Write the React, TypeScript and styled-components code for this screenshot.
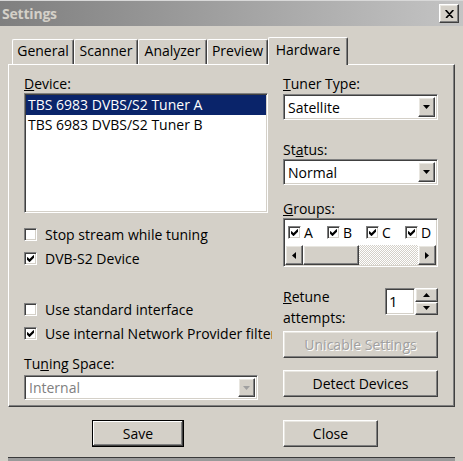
import React from "react";
import styled, { createGlobalStyle, css } from "styled-components";

const Global = createGlobalStyle`
  html, body { margin: 0; padding: 0; background: #d4d0c8; }
  body { font-family: "Open Sans", "Noto Sans", sans-serif; font-size: 14px; color: #000; }
  * { box-sizing: border-box; }
`;

const sunken = css`
  border: 1px solid;
  border-color: #808080 #ffffff #ffffff #808080;
  box-shadow: inset 1px 1px 0 #404040, inset -1px -1px 0 #d4d0c8;
`;

const raised = css`
  border: 1px solid;
  border-color: #ffffff #404040 #404040 #ffffff;
  box-shadow: inset -1px -1px 0 #808080, inset 1px 1px 0 #e8e6e0;
`;

const Window = styled.div`
  width: 463px;
  height: 461px;
  background: #d4d0c8;
  display: flex;
  flex-direction: column;
  overflow: hidden;
`;

const TitleBar = styled.div`
  height: 26px;
  flex: none;
  border-top: 1px solid #d8d8d8;
  background: linear-gradient(to right, #7f7f7f, #c4c4c4);
  display: flex;
  align-items: center;
  justify-content: space-between;
  padding: 0 4px 0 2px;
`;

const Title = styled.div`
  font-weight: bold;
  font-size: 14px;
  color: #d4d0c8;
  letter-spacing: -0.2px;
`;

const CloseBox = styled.div`
  width: 20px;
  height: 19px;
  background: #d4d0c8;
  ${raised};
  display: flex;
  align-items: center;
  justify-content: center;
`;

const Body = styled.div`
  flex: 1;
  padding: 11px 8px 0 8px;
  display: flex;
  flex-direction: column;
`;

const TabStrip = styled.div`
  height: 27px;
  display: flex;
  align-items: flex-end;
  padding-left: 4px;
  position: relative;
  z-index: 1;
`;

const Tab = styled.div<{ $active?: boolean; $w: number }>`
  width: ${(p) => p.$w}px;
  height: ${(p) => (p.$active ? 28 : 25)}px;
  margin-bottom: ${(p) => (p.$active ? -1 : 0)}px;
  background: #d4d0c8;
  border-top: 1px solid #ffffff;
  border-left: 1px solid #ffffff;
  border-right: 1px solid #404040;
  box-shadow: inset -1px 0 0 #808080;
  border-radius: 2px 2px 0 0;
  display: flex;
  justify-content: center;
  padding-top: ${(p) => (p.$active ? 2 : 1)}px;
  line-height: 20px;
  white-space: nowrap;
`;

const Panel = styled.div`
  height: 343px;
  border: 1px solid;
  border-color: #ffffff #404040 #404040 #ffffff;
  box-shadow: inset -1px -1px 0 #808080;
  padding: 10px 0 0 15px;
  display: grid;
  grid-template-columns: 244px 155px;
  column-gap: 15px;
  align-items: start;
`;

const Column = styled.div`
  display: flex;
  flex-direction: column;
`;

const Label = styled.div<{ $mt?: number }>`
  line-height: 18px;
  height: 18px;
  margin-top: ${(p) => p.$mt ?? 0}px;
  white-space: nowrap;
`;

const ListBox = styled.div`
  height: 120px;
  background: #fff;
  ${sunken};
  padding: 1px;
`;

const ListItem = styled.div<{ $selected?: boolean }>`
  height: 20px;
  line-height: 20px;
  padding-left: 2px;
  background: ${(p) => (p.$selected ? "#0a246a" : "transparent")};
  color: ${(p) => (p.$selected ? "#fff" : "#000")};
  white-space: nowrap;
`;

const CheckRow = styled.div<{ $mt?: number }>`
  width: 248px;
  height: 24px;
  margin-top: ${(p) => p.$mt ?? 0}px;
  display: flex;
  align-items: center;
  gap: 8px;
  overflow: hidden;
  white-space: nowrap;
`;

const Box = styled.div`
  width: 13px;
  height: 13px;
  flex: none;
  background: #fff;
  ${sunken};
  display: flex;
  align-items: center;
  justify-content: center;
`;

const Combo = styled.div<{ $mt?: number; $disabled?: boolean; $h?: number; $w?: number }>`
  height: ${(p) => p.$h ?? 26}px;
  width: ${(p) => (p.$w ? `${p.$w}px` : "auto")};
  margin-top: ${(p) => p.$mt ?? 0}px;
  background: #fff;
  ${sunken};
  display: flex;
  align-items: stretch;
  padding: 2px;
  color: ${(p) => (p.$disabled ? "#808080" : "#000")};
`;

const ComboText = styled.div`
  flex: 1;
  padding-left: 2px;
  display: flex;
  align-items: center;
  white-space: nowrap;
`;

const ArrowBtn = styled.div<{ $w?: number }>`
  width: ${(p) => p.$w ?? 17}px;
  background: #d4d0c8;
  ${raised};
  display: flex;
  align-items: center;
  justify-content: center;
  flex: none;
`;

const GroupsBox = styled.div`
  height: 49px;
  background: #fff;
  ${sunken};
  padding: 1px;
  display: flex;
  flex-direction: column;
`;

const GroupsRow = styled.div`
  height: 26px;
  display: flex;
  align-items: center;
  padding-left: 3px;
`;

const GroupItem = styled.div`
  width: 39px;
  display: flex;
  align-items: center;
  gap: 3px;
  flex: none;
`;

const ScrollBar = styled.div`
  height: 20px;
  display: flex;
`;

const Track = styled.div`
  flex: 1;
  display: flex;
  background: repeating-conic-gradient(#d4d0c8 0 25%, #ffffff 0 50%) 0 0 / 2px 2px;
`;

const Thumb = styled.div`
  width: 56px;
  background: #d4d0c8;
  ${raised};
`;

const RetuneRow = styled.div`
  margin-top: 19px;
  display: flex;
  justify-content: space-between;
  align-items: flex-start;
`;

const RetuneLabel = styled.div`
  line-height: 21px;
`;

const Spin = styled.div`
  margin-top: 2px;
  display: flex;
  height: 27px;
`;

const SpinEdit = styled.div`
  width: 30px;
  background: #fff;
  ${sunken};
  padding: 2px 3px;
  line-height: 20px;
  font-size: 15px;
`;

const SpinButtons = styled.div`
  width: 23px;
  display: flex;
  flex-direction: column;
`;

const SpinBtn = styled.div`
  flex: 1;
  background: #d4d0c8;
  ${raised};
  display: flex;
  align-items: center;
  justify-content: center;
`;

const Button = styled.div<{ $mt?: number; $w?: number; $disabled?: boolean; $default?: boolean }>`
  width: ${(p) => (p.$w ? `${p.$w}px` : "100%")};
  height: 27px;
  margin-top: ${(p) => p.$mt ?? 0}px;
  background: #d4d0c8;
  display: flex;
  align-items: center;
  justify-content: center;
  white-space: nowrap;
  color: ${(p) => (p.$disabled ? "#a0a0a0" : "#000")};
  text-shadow: ${(p) => (p.$disabled ? "1px 1px 0 #ffffff" : "none")};
  ${(p) =>
    p.$default
      ? css`
          border: 1px solid #000;
          box-shadow: inset -1px -1px 0 #404040, inset 1px 1px 0 #ffffff, inset -2px -2px 0 #808080;
        `
      : raised};
`;

const ButtonRow = styled.div`
  margin-top: 13px;
  display: flex;
  padding-left: 84px;
  gap: 99px;
`;

const Footer = styled.div`
  margin-top: auto;
  height: 4px;
  border-top: 1px solid #3a3a3a;
  background: #9a9a9a;
`;

const Check = ({ color = "#000" }: { color?: string }) => (
  <svg width="7" height="7" viewBox="0 0 7 7">
    <path d="M0 2.5 L2.5 5 L7 0.5 M0 3.8 L2.5 6.3 L7 1.8" stroke={color} strokeWidth="1.3" fill="none" />
  </svg>
);

const Down = ({ color = "#000" }: { color?: string }) => (
  <svg width="7" height="4" viewBox="0 0 7 4">
    <polygon points="0,0 7,0 3.5,4" fill={color} />
  </svg>
);

const Up = () => (
  <svg width="7" height="4" viewBox="0 0 7 4">
    <polygon points="0,4 7,4 3.5,0" fill="#000" />
  </svg>
);

const Left = () => (
  <svg width="4" height="7" viewBox="0 0 4 7">
    <polygon points="4,0 4,7 0,3.5" fill="#000" />
  </svg>
);

const Right = () => (
  <svg width="4" height="7" viewBox="0 0 4 7">
    <polygon points="0,0 0,7 4,3.5" fill="#000" />
  </svg>
);

const CheckBox = ({ checked, label, mt }: { checked?: boolean; label: string; mt?: number }) => (
  <CheckRow $mt={mt}>
    <Box>{checked && <Check />}</Box>
    <span>{label}</span>
  </CheckRow>
);

export default function App() {
  return (
    <>
      <Global />
      <Window>
        <TitleBar>
          <Title>Settings</Title>
          <CloseBox>
            <svg width="9" height="8" viewBox="0 0 9 8">
              <path d="M1 0 L8 8 M8 0 L1 8 M0.5 0 L7.5 8 M8.5 0 L1.5 8" stroke="#000" strokeWidth="1.2" />
            </svg>
          </CloseBox>
        </TitleBar>
        <Body>
          <TabStrip>
            <Tab $w={62}>General</Tab>
            <Tab $w={64}>Scanner</Tab>
            <Tab $w={69}>Analyzer</Tab>
            <Tab $w={61}>Preview</Tab>
            <Tab $w={80} $active>Hardware</Tab>
          </TabStrip>
          <Panel>
            <Column>
              <Label>
                <u>D</u>evice:
              </Label>
              <ListBox>
                <ListItem $selected>TBS 6983 DVBS/S2 Tuner A</ListItem>
                <ListItem>TBS 6983 DVBS/S2 Tuner B</ListItem>
              </ListBox>
              <CheckBox label="Stop stream while tuning" mt={9} />
              <CheckBox label="DVB-S2 Device" checked />
              <CheckBox label="Use standard interface" mt={27} />
              <CheckBox label="Use internal Network Provider filter" checked />
              <Label $mt={10}>
                Tu<u>n</u>ing Space:
              </Label>
              <Combo $mt={2} $disabled $h={25} $w={234}>
                <ComboText>Internal</ComboText>
                <ArrowBtn>
                  <Down color="#a0a0a0" />
                </ArrowBtn>
              </Combo>
            </Column>
            <Column>
              <Label>
                <u>T</u>uner Type:
              </Label>
              <Combo $mt={1}>
                <ComboText>Satellite</ComboText>
                <ArrowBtn>
                  <Down />
                </ArrowBtn>
              </Combo>
              <Label $mt={21}>
                St<u>a</u>tus:
              </Label>
              <Combo>
                <ComboText>Normal</ComboText>
                <ArrowBtn>
                  <Down />
                </ArrowBtn>
              </Combo>
              <Label $mt={15}>
                <u>G</u>roups:
              </Label>
              <GroupsBox>
                <GroupsRow>
                  {["A", "B", "C", "D"].map((g) => (
                    <GroupItem key={g}>
                      <Box>
                        <Check />
                      </Box>
                      <span>{g}</span>
                    </GroupItem>
                  ))}
                </GroupsRow>
                <ScrollBar>
                  <ArrowBtn $w={18}>
                    <Left />
                  </ArrowBtn>
                  <Track>
                    <Thumb />
                  </Track>
                  <ArrowBtn $w={18}>
                    <Right />
                  </ArrowBtn>
                </ScrollBar>
              </GroupsBox>
              <RetuneRow>
                <RetuneLabel>
                  <u>R</u>etune
                  <br />
                  attempts:
                </RetuneLabel>
                <Spin>
                  <SpinEdit>1</SpinEdit>
                  <SpinButtons>
                    <SpinBtn>
                      <Up />
                    </SpinBtn>
                    <SpinBtn>
                      <Down />
                    </SpinBtn>
                  </SpinButtons>
                </Spin>
              </RetuneRow>
              <Button $mt={3} $disabled>
                Unicable Settings
              </Button>
              <Button $mt={12}>Detect Devices</Button>
            </Column>
          </Panel>
          <ButtonRow>
            <Button $w={92} $default>
              Save
            </Button>
            <Button $w={95}>Close</Button>
          </ButtonRow>
          <Footer />
        </Body>
      </Window>
    </>
  );
}
